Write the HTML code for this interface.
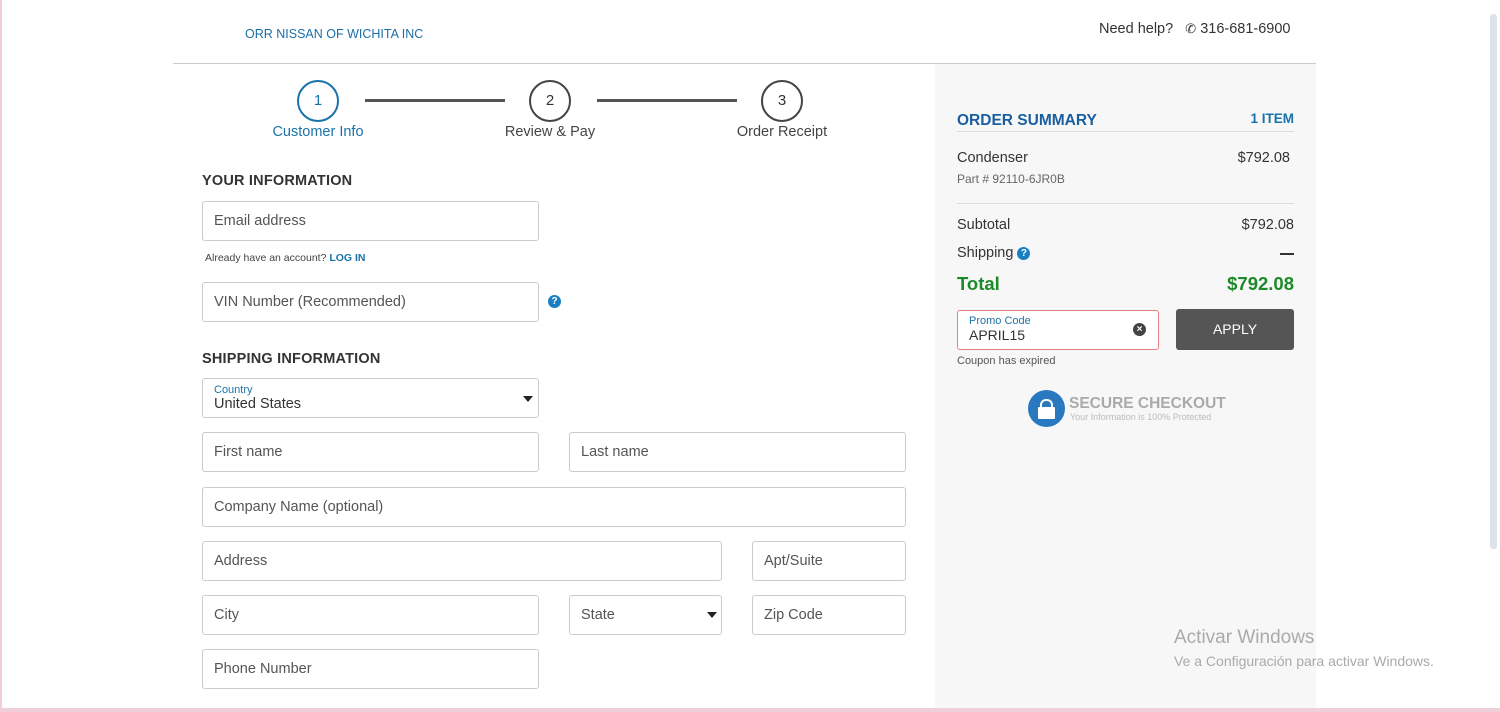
<!DOCTYPE html>
<html><head><meta charset="utf-8"><style>
*{box-sizing:border-box;margin:0;padding:0}
body{width:1500px;height:712px;overflow:hidden;background:#fff;font-family:"Liberation Sans",sans-serif;color:#333;position:relative}
.a{position:absolute}
.r{position:absolute;right:206px;text-align:right}
.in{position:absolute;border:1px solid #ccc;border-radius:3px;background:#fff;font-size:14.5px;color:#555;padding-left:11px;display:flex;align-items:center;height:40px}
.h{font-weight:bold;font-size:14.5px;color:#333;letter-spacing:.2px}
.circ{position:absolute;width:42px;height:42px;border-radius:50%;border:2px solid #444;text-align:center;line-height:38px;font-size:15px;color:#333}
.line{position:absolute;height:3px;background:#555;top:99px}
.lbl{position:absolute;font-size:14.5px;color:#444;top:124px;text-align:center;width:160px}
.caret{position:absolute;width:0;height:0;border-left:5px solid transparent;border-right:5px solid transparent;border-top:6px solid #222}
</style></head><body>
<div class="a" style="left:0;top:0;width:2px;height:712px;background:#f0d0d8"></div>
<div class="a" style="left:245px;top:27px;font-size:12.5px;color:#1a6fa8">ORR NISSAN OF WICHITA INC</div>
<div class="a" style="left:1099px;top:21px;font-size:14.5px;color:#333">Need help? &nbsp;&nbsp;<span style="font-size:13px">&#9990;</span> 316-681-6900</div>
<div class="a" style="left:173px;top:63px;width:1143px;height:1px;background:#ccc"></div>
<div class="a" style="left:935px;top:64px;width:381px;height:648px;background:#f7f7f7"></div>
<div class="a" style="left:1490px;top:14px;width:7px;height:535px;background:#dde3ea;border-radius:3px"></div>
<div class="a" style="left:0;top:708px;width:1500px;height:4px;background:#f0d0d8"></div>

<div class="circ" style="left:297px;top:80px;border-color:#1a73a8;color:#1a73a8">1</div>
<div class="line" style="left:365px;width:140px"></div>
<div class="circ" style="left:529px;top:80px">2</div>
<div class="line" style="left:597px;width:140px"></div>
<div class="circ" style="left:761px;top:80px">3</div>
<div class="lbl" style="left:238px;color:#1a73a8">Customer Info</div>
<div class="lbl" style="left:470px">Review &amp; Pay</div>
<div class="lbl" style="left:702px">Order Receipt</div>

<div class="a h" style="left:202px;top:173px">YOUR INFORMATION</div>
<div class="in" style="left:202px;top:201px;width:337px">Email address</div>
<div class="a" style="left:205px;top:252px;font-size:10.5px;color:#444">Already have an account? <span style="color:#1a73a8;font-weight:bold">LOG IN</span></div>
<div class="in" style="left:202px;top:282px;width:337px">VIN Number (Recommended)</div>
<div class="a" style="left:548px;top:295px;width:13px;height:13px;border-radius:50%;background:#1a7fc0;color:#fff;font-size:10px;font-weight:bold;text-align:center;line-height:13px">?</div>
<div class="a h" style="left:202px;top:351px">SHIPPING INFORMATION</div>
<div class="in" style="left:202px;top:378px;width:337px;display:block;padding-top:5px"><div style="font-size:11px;color:#1a73a8">Country</div><div style="font-size:14.5px;color:#333">United States</div></div>
<div class="caret" style="left:523px;top:396px"></div>
<div class="in" style="left:202px;top:432px;width:337px">First name</div>
<div class="in" style="left:569px;top:432px;width:337px">Last name</div>
<div class="in" style="left:202px;top:487px;width:704px">Company Name (optional)</div>
<div class="in" style="left:202px;top:541px;width:520px">Address</div>
<div class="in" style="left:752px;top:541px;width:154px">Apt/Suite</div>
<div class="in" style="left:202px;top:595px;width:337px">City</div>
<div class="in" style="left:569px;top:595px;width:153px">State</div>
<div class="caret" style="left:707px;top:612px"></div>
<div class="in" style="left:752px;top:595px;width:154px">Zip Code</div>
<div class="in" style="left:202px;top:649px;width:337px">Phone Number</div>

<div class="a" style="left:957px;top:112px;font-size:15.5px;color:#1a5fa0;font-weight:bold">ORDER SUMMARY</div>
<div class="r" style="top:111px;font-size:13.5px;color:#1a73a8;font-weight:bold">1 ITEM</div>
<div class="a" style="left:957px;top:131px;width:337px;height:1px;background:#ddd"></div>
<div class="a" style="left:957px;top:150px;font-size:14.5px;color:#333">Condenser</div>
<div class="r" style="right:210px;top:150px;font-size:14.5px;color:#333">$792.08</div>
<div class="a" style="left:957px;top:172px;font-size:12px;color:#666">Part # 92110-6JR0B</div>
<div class="a" style="left:957px;top:203px;width:337px;height:1px;background:#ddd"></div>
<div class="a" style="left:957px;top:217px;font-size:14.5px">Subtotal</div>
<div class="r" style="top:217px;font-size:14.5px">$792.08</div>
<div class="a" style="left:957px;top:245px;font-size:14.5px">Shipping <span style="display:inline-block;width:13px;height:13px;border-radius:50%;background:#1a7fc0;color:#fff;font-size:10px;font-weight:bold;text-align:center;line-height:13px;vertical-align:1px">?</span></div>
<div class="a" style="left:1280px;top:253px;width:14px;height:2px;background:#333"></div>
<div class="a" style="left:957px;top:273px;font-size:18.5px;color:#1d8a2a;font-weight:bold">Total</div>
<div class="r" style="top:273px;font-size:18.5px;color:#1d8a2a;font-weight:bold">$792.08</div>
<div class="a" style="left:957px;top:310px;width:202px;height:40px;border:1px solid #e08080;border-radius:3px;background:#fff;padding:4px 11px">
<div style="font-size:11px;color:#1a73a8">Promo Code</div><div style="font-size:14px;color:#333">APRIL15</div></div>
<div class="a" style="left:1133px;top:323px;width:13px;height:13px;border-radius:50%;background:#444;color:#fff;font-size:10px;text-align:center;line-height:13px;font-weight:bold">×</div>
<div class="a" style="left:1176px;top:309px;width:118px;height:41px;background:#555;border-radius:3px;color:#fff;font-size:14px;text-align:center;line-height:41px">APPLY</div>
<div class="a" style="left:957px;top:355px;font-size:11px;color:#555">Coupon has expired</div>
<div class="a" style="left:1028px;top:390px;width:37px;height:37px;border-radius:50%;background:#2a78c0"></div>
<div class="a" style="left:1040px;top:399px;width:13px;height:11px;border:2px solid #fff;border-bottom:none;border-radius:6px 6px 0 0"></div>
<div class="a" style="left:1038px;top:407px;width:17px;height:12px;background:#fff;border-radius:1px"></div>
<div class="a" style="left:1069px;top:395px;font-size:15.5px;font-weight:bold;color:#aaa">SECURE CHECKOUT</div>
<div class="a" style="left:1070px;top:412px;font-size:9px;color:#bbb">Your Information is 100% Protected</div>

<div class="a" style="left:1174px;top:627px;font-size:19px;color:#aaa">Activar Windows</div>
<div class="a" style="left:1174px;top:653px;font-size:14px;color:#aaa">Ve a Configuración para activar Windows.</div>
</body></html>
